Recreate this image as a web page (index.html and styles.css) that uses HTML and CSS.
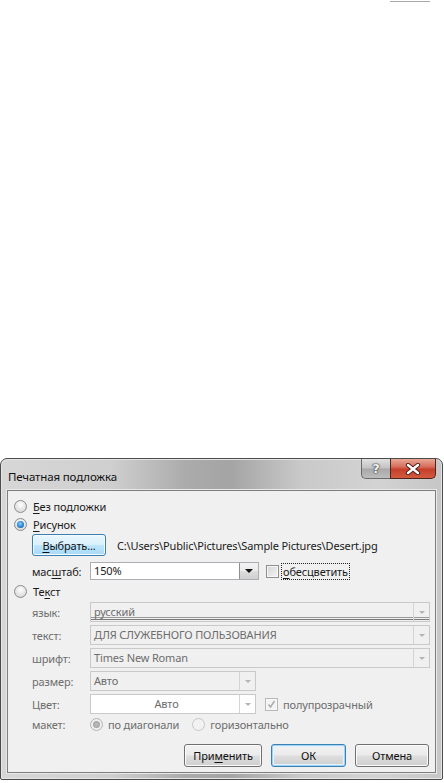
FILE: index.html
```html
<!DOCTYPE html>
<html lang="ru">
<head>
<meta charset="utf-8">
<title>Печатная подложка</title>
<link rel="stylesheet" href="styles.css">
</head>
<body>
<div class="topline"></div>
<div class="dialog">
  <div class="titlebar">
    <span class="title">Печатная подложка</span>
    <div class="caption-btns">
      <div class="cbtn help"><span>?</span></div>
      <div class="cbtn close">
        <svg width="16" height="12" viewBox="0 0 16 12"><path d="M3 2 L13 10 M13 2 L3 10" stroke="#4a1e14" stroke-width="4.2" stroke-linecap="round"/><path d="M3 2 L13 10 M13 2 L3 10" stroke="#ffffff" stroke-width="2.4" stroke-linecap="round"/></svg>
      </div>
    </div>
  </div>
  <div class="client">
    <div class="row r-radio">
      <span class="radio"></span><span class="lbl"><u>Б</u>ез подложки</span>
    </div>
    <div class="row r-radio">
      <span class="radio checked"></span><span class="lbl"><u>Р</u>исунок</span>
    </div>
    <div class="row r-pick">
      <div class="btn btn-focus btn-pick"><u>В</u>ыбрать...</div>
      <span class="path">C:\Users\Public\Pictures\Sample Pictures\Desert.jpg</span>
    </div>
    <div class="row r-scale">
      <span class="flabel">мас<u>ш</u>таб:</span>
      <div class="combo">
        <span class="combo-text">150%</span>
        <span class="dd"><span class="tri"></span></span>
      </div>
      <span class="check"></span><span class="lbl focusrect"><u>о</u>бесцветить</span>
    </div>
    <div class="row r-radio r-text">
      <span class="radio"></span><span class="lbl">Те<u>к</u>ст</span>
    </div>
    <div class="row r-field first">
      <span class="flabel dis">язык:</span>
      <div class="dfield wide lang"><span class="dtext">русский</span><span class="ddd"><span class="tri dis"></span></span></div>
    </div>
    <div class="row r-field">
      <span class="flabel dis">текст:</span>
      <div class="dfield wide"><span class="dtext">ДЛЯ СЛУЖЕБНОГО ПОЛЬЗОВАНИЯ</span><span class="ddd"><span class="tri dis"></span></span></div>
    </div>
    <div class="row r-field">
      <span class="flabel dis">шрифт:</span>
      <div class="dfield wide"><span class="dtext">Times New Roman</span><span class="ddd"><span class="tri dis"></span></span></div>
    </div>
    <div class="row r-field">
      <span class="flabel dis">размер:</span>
      <div class="dfield narrow"><span class="dtext">Авто</span><span class="ddd"><span class="tri dis"></span></span></div>
    </div>
    <div class="row r-field">
      <span class="flabel dis">Цвет:</span>
      <div class="dfield narrow white"><span class="dtext center">Авто</span><span class="ddd"><span class="tri dis"></span></span></div>
      <span class="check dis-checked">
        <svg width="11" height="11" viewBox="0 0 11 11"><path d="M2.5 5.5 L4.5 8 L8.5 2" fill="none" stroke="#a9a9a9" stroke-width="1.4"/></svg>
      </span><span class="lbl dis">полупрозрачный</span>
    </div>
    <div class="row r-layout">
      <span class="flabel dis">макет:</span>
      <span class="radio dis-checked"></span><span class="lbl dis">по диагонали</span>
      <span class="radio dis r2"></span><span class="lbl dis">горизонтально</span>
    </div>
    <div class="row r-buttons">
      <div class="btn b-apply">При<u>м</u>енить</div>
      <div class="btn b-ok">ОК</div>
      <div class="btn b-cancel">Отмена</div>
    </div>
  </div>
</div>
</body>
</html>
```

FILE: styles.css
```css
html, body {
  margin: 0;
  padding: 0;
  background: #ffffff;
}
body {
  width: 444px;
  height: 783px;
  overflow: hidden;
  font-family: "Noto Sans", "Open Sans", sans-serif;
  font-size: 11px;
  letter-spacing: -0.15px;
  color: #1a1a1a;
}
u { text-decoration: underline; text-underline-offset: 2px; }

.topline {
  margin: 1px 0 0 390px;
  width: 40px;
  height: 1px;
  background: #a8a8a8;
}

.dialog {
  margin-top: 456px;
  width: 443px;
  height: 322px;
  box-sizing: border-box;
  border: 1px solid #4b4b4b;
  border-radius: 7px 7px 2px 2px;
  background:
    linear-gradient(90deg, #d7d7d7 0%, #cfcfcf 25%, #ababab 42%, #a4a4a4 52%, #c9c9c9 68%, #d3d3d3 85%, #c6c6c6 100%);
  box-shadow: inset 0 0 0 1px #e6e6e6;
  padding: 0 6px 6px 6px;
  display: flex;
  flex-direction: column;
}
.titlebar {
  height: 31px;
  flex: none;
  display: flex;
  align-items: flex-start;
  justify-content: space-between;
}
.title {
  margin: 10px 0 0 1px;
  font-size: 11.5px;
  color: #111;
}
.caption-btns {
  display: flex;
}
.cbtn {
  height: 20px;
  box-sizing: border-box;
  display: flex;
  align-items: center;
  justify-content: center;
}
.help {
  width: 29px;
  border: 1px solid #6a6a6a;
  border-top: none;
  border-right: none;
  border-radius: 0 0 0 5px;
  background: linear-gradient(#e2e2e2, #c4c4c4 45%, #a9a9a9 55%, #bdbdbd);
}
.help span {
  font-family: "DejaVu Sans", sans-serif;
  font-weight: bold;
  font-size: 13px;
  color: #f4f4f4;
  text-shadow: 0 0 1px #333, 0 0 1px #333, 0 0 2px #555;
  line-height: 1;
  margin-top: -1px;
}
.close {
  width: 46px;
  border: 1px solid #4f241c;
  border-top: none;
  border-radius: 0 0 5px 0;
  background: linear-gradient(#e9a896, #d6705d 40%, #c6402c 55%, #d35a3f);
}

.client {
  flex: 1;
  background: #f0f0f0;
  border: 1px solid #7e7e7e;
  box-shadow: 0 0 0 1px #e9e9e9;
  padding: 6px 0 0 0;
  display: flex;
  flex-direction: column;
}

.row {
  display: flex;
  align-items: center;
  flex: none;
}
.r-radio {
  height: 18px;
  padding-left: 6px;
}
.r-radio .radio { margin-right: 6px; }
.r-text { margin-top: 2px; }

.radio {
  width: 11px;
  height: 11px;
  border: 1px solid #8a8c8e;
  border-radius: 50%;
  background: radial-gradient(circle at 50% 35%, #ffffff 0%, #e9e9e9 45%, #cfcfcf 100%);
  position: relative;
  flex: none;
}
.radio.checked::after {
  content: "";
  position: absolute;
  left: 2px; top: 2px;
  width: 7px; height: 7px;
  border-radius: 50%;
  background: radial-gradient(circle at 45% 40%, #8fd1ff 0%, #2d8ad6 50%, #0f4f8e 100%);
}
.radio.dis-checked {
  border-color: #b5b5b5;
  background: radial-gradient(circle, #fafafa, #e6e6e6);
}
.radio.dis-checked::after {
  content: "";
  position: absolute;
  left: 2px; top: 2px;
  width: 7px; height: 7px;
  border-radius: 50%;
  background: radial-gradient(circle, #bdbdbd, #9a9a9a);
}
.radio.dis {
  border-color: #c7c7c7;
  background: #f2f2f2;
}

.lbl { white-space: nowrap; }
.dis { color: #6d6d6d; }

.r-pick {
  height: 22px;
  margin-top: 1px;
  padding-left: 24px;
}
.btn {
  box-sizing: border-box;
  height: 22px;
  border: 1px solid #707070;
  border-radius: 3px;
  background: linear-gradient(#f2f2f2 0%, #ebebeb 48%, #dddddd 52%, #cfcfcf 100%);
  box-shadow: inset 0 0 0 1px #fbfbfb;
  display: flex;
  align-items: center;
  justify-content: center;
  color: #111;
  flex: none;
}
.btn-pick {
  width: 74px;
  border-color: #3c7fb1;
  background: linear-gradient(#eaf6fd 0%, #d9f0fc 48%, #bee6fd 52%, #a7d9f5 100%);
  box-shadow: inset 0 0 0 1px #f4fbff;
}
.path {
  margin-left: 11px;
  white-space: nowrap;
}

.r-scale {
  height: 18px;
  margin-top: 6px;
  padding-left: 24px;
}
.flabel {
  width: 58px;
  flex: none;
  white-space: nowrap;
}
.combo {
  width: 169px;
  height: 18px;
  box-sizing: border-box;
  border: 1px solid #abadb3;
  background: #fff;
  display: flex;
  flex: none;
}
.combo-text {
  flex: 1;
  padding-left: 3px;
  line-height: 16px;
}
.dd {
  width: 19px;
  box-sizing: border-box;
  border-left: 1px solid #8e8f8f;
  background: linear-gradient(#f2f2f2, #ebebeb 48%, #dddddd 52%, #cfcfcf);
  display: flex;
  align-items: center;
  justify-content: center;
}
.tri {
  width: 0; height: 0;
  border-left: 4px solid transparent;
  border-right: 4px solid transparent;
  border-top: 4px solid #111;
}
.tri.dis {
  border-left-width: 3px;
  border-right-width: 3px;
  border-top: 3px solid #b4b4b4;
}
.check {
  width: 11px;
  height: 11px;
  border: 1px solid #8e8f8f;
  background: linear-gradient(135deg, #d5d5d5, #f4f4f4);
  box-shadow: inset 0 0 0 1px #f7f7f7;
  flex: none;
  margin-left: 7px;
  margin-right: 3px;
  display: flex;
  align-items: center;
  justify-content: center;
}
.check.dis-checked {
  border-color: #b8b8b8;
  background: #f4f4f4;
  margin-left: 9px;
  margin-right: 5px;
}
.focusrect {
  outline: 1px dotted #222;
  outline-offset: 0px;
  padding: 0 1px;
  line-height: 15px;
}

.r-field {
  height: 20px;
  margin-top: 3px;
  padding-left: 24px;
}
.r-field.first { margin-top: 2px; }
.dfield {
  height: 20px;
  box-sizing: border-box;
  border: 1px solid #c9c9c9;
  background: #f0f0f0;
  display: flex;
  flex: none;
}
.dfield.wide { width: 340px; }
.dfield.narrow { width: 166px; }
.dfield.white { background: #ffffff; }
.dfield.lang {
  box-shadow: inset 0 -1px 0 #f0f0f0, inset 0 -2px 0 #7a7a7a, inset 0 -3px 0 #f0f0f0, inset 0 -4px 0 #9a9a9a;
}
.dtext {
  flex: 1;
  padding-left: 3px;
  line-height: 18px;
  color: #6d6d6d;
  white-space: nowrap;
  overflow: hidden;
}
.dtext.center { text-align: center; }
.ddd {
  width: 16px;
  box-sizing: border-box;
  border-left: 1px solid #d4d4d4;
  display: flex;
  align-items: center;
  justify-content: center;
}

.r-layout {
  height: 18px;
  margin-top: 1px;
  padding-left: 24px;
}
.r-layout .radio { margin-right: 5px; }
.r-layout .r2 { margin-left: 13px; }

.r-buttons {
  height: 23px;
  margin-top: 11px;
  justify-content: flex-end;
  padding-right: 6px;
  gap: 9px;
}
.r-buttons .btn { height: 23px; }
.b-apply { width: 78px; }
.b-ok {
  width: 75px;
  border-color: #3c7fb1;
  box-shadow: inset 0 0 0 1px #9fd3f7, inset 0 0 0 2px #e3f2fc;
}
.b-cancel { width: 74px; }
```
